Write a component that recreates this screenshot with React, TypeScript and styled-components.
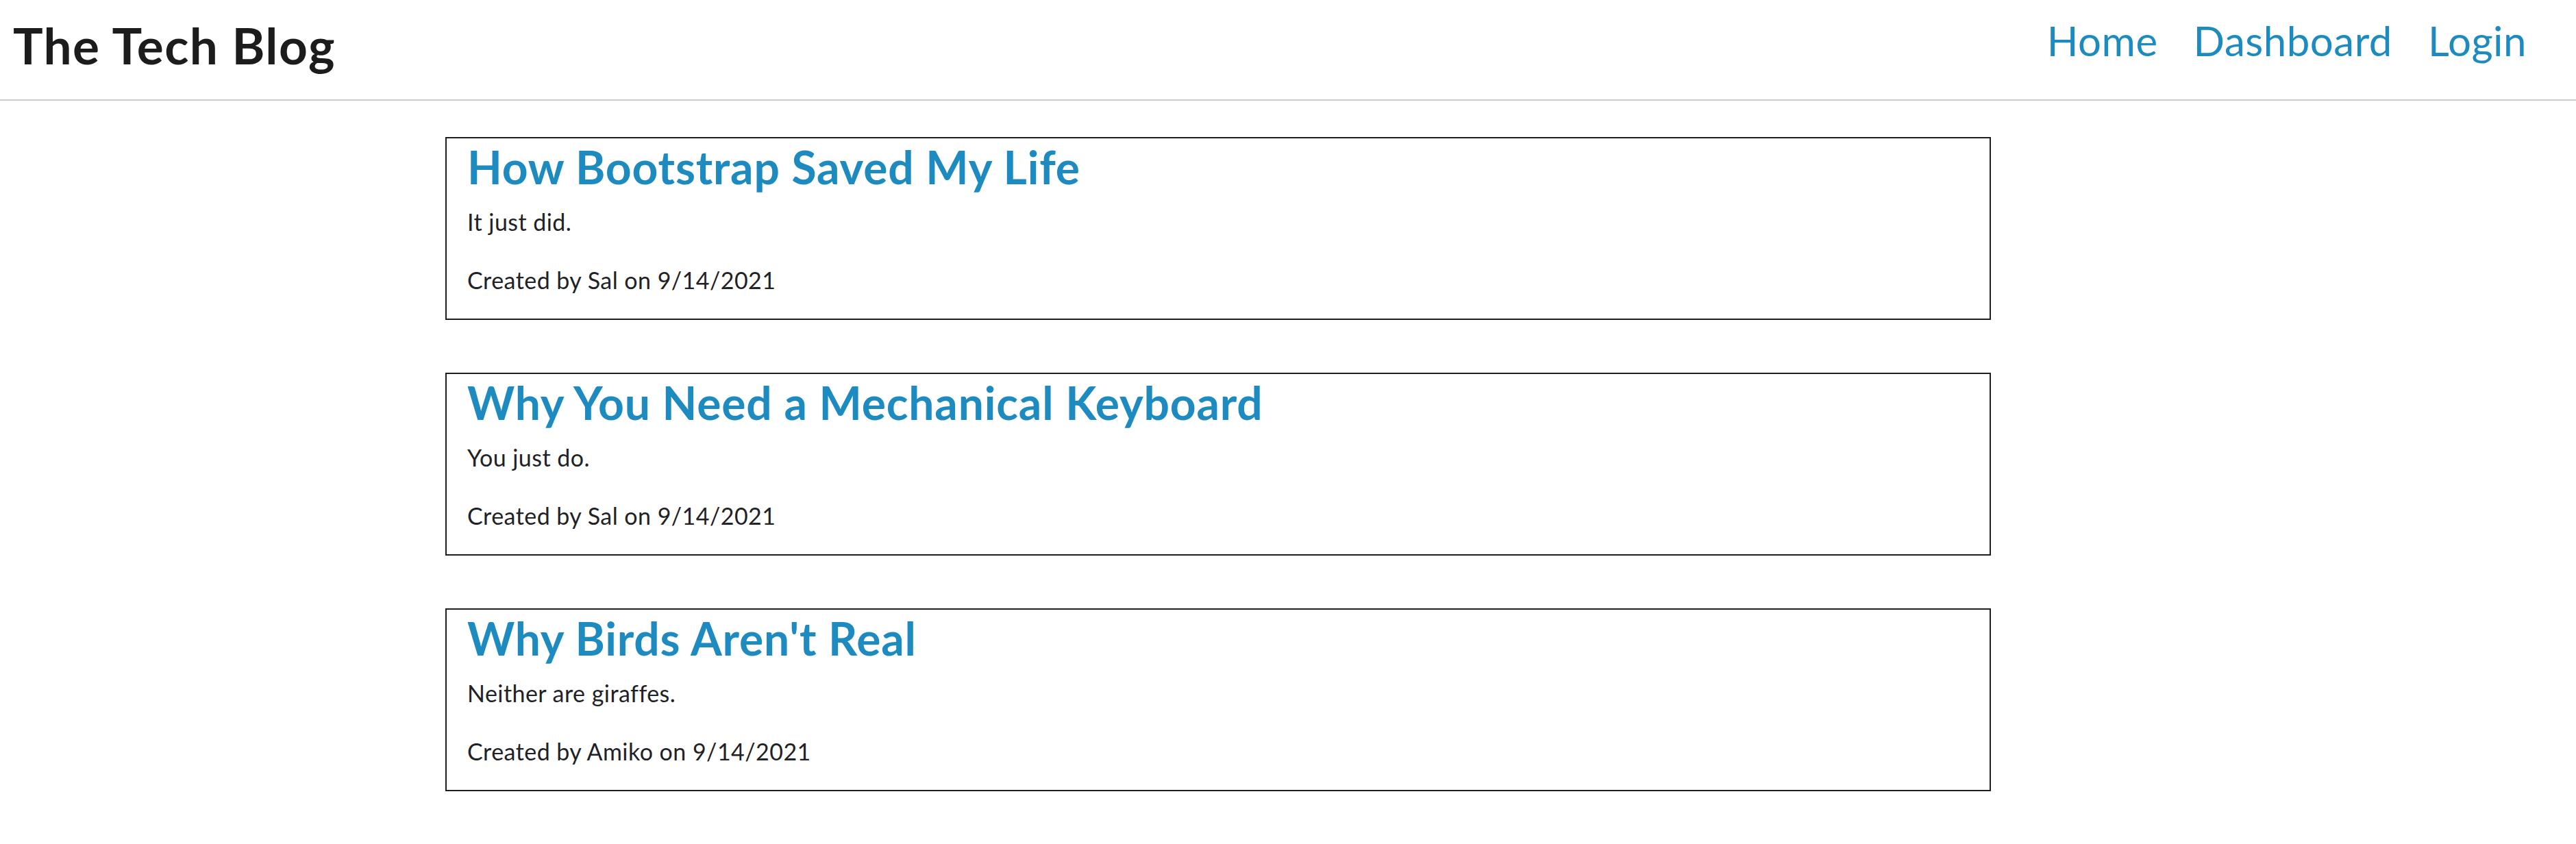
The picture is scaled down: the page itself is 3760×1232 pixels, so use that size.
import React from "react";
import styled, { createGlobalStyle } from "styled-components";

const GlobalStyle = createGlobalStyle`
  html, body {
    margin: 0;
    padding: 0;
    background: #ffffff;
  }
  body {
    font-family: "Lato", "Open Sans", sans-serif;
    color: #212529;
  }
  * { box-sizing: border-box; }
`;

const Header = styled.header`
  display: flex;
  justify-content: space-between;
  align-items: flex-start;
  height: 147px;
  padding: 30px 72px 0 19px;
  border-bottom: 2px solid #cccccc;
`;

const Brand = styled.h1`
  margin: 0;
  font-family: "Lato", sans-serif;
  font-weight: 700;
  font-size: 73px;
  line-height: 73px;
  letter-spacing: 1.4px;
  color: #1c1c1c;
`;

const Nav = styled.nav`
  display: flex;
  gap: 52px;
`;

const NavLink = styled.a`
  font-family: "Lato", sans-serif;
  font-weight: 400;
  font-size: 60px;
  line-height: 58px;
  letter-spacing: 0.5px;
  color: #1d8bc0;
  text-decoration: none;
`;

const Main = styled.main`
  display: flex;
  flex-direction: column;
  gap: 77px;
  width: 2256px;
  margin: 53px 0 0 650px;
`;

const Card = styled.article`
  display: flex;
  flex-direction: column;
  border: 2px solid #1e1e1e;
  padding: 0 34px 31px 30px;
  height: 267px;
`;

const PostTitle = styled.h2`
  margin: 0 0 13px;
  font-family: "Lato", sans-serif;
  font-weight: 700;
  font-size: 66px;
  line-height: 84px;
  letter-spacing: 0.8px;
  color: #1d8bc0;
`;

const PostText = styled.p<{ $last?: boolean }>`
  margin: 0 0 ${(p) => (p.$last ? 0 : 35)}px;
  font-family: "Lato", sans-serif;
  font-size: 34px;
  line-height: 50px;
  letter-spacing: 0.45px;
  color: #1f2226;
`;

const posts = [
  { title: "How Bootstrap Saved My Life", body: "It just did.", author: "Sal", date: "9/14/2021" },
  { title: "Why You Need a Mechanical Keyboard", body: "You just do.", author: "Sal", date: "9/14/2021" },
  { title: "Why Birds Aren't Real", body: "Neither are giraffes.", author: "Amiko", date: "9/14/2021" },
];

export default function App() {
  return (
    <>
      <GlobalStyle />
      <Header>
        <Brand>The Tech Blog</Brand>
        <Nav>
          <NavLink href="#">Home</NavLink>
          <NavLink href="#">Dashboard</NavLink>
          <NavLink href="#">Login</NavLink>
        </Nav>
      </Header>
      <Main>
        {posts.map((p) => (
          <Card key={p.title}>
            <PostTitle>{p.title}</PostTitle>
            <PostText>{p.body}</PostText>
            <PostText $last>
              Created by {p.author} on {p.date}
            </PostText>
          </Card>
        ))}
      </Main>
    </>
  );
}
